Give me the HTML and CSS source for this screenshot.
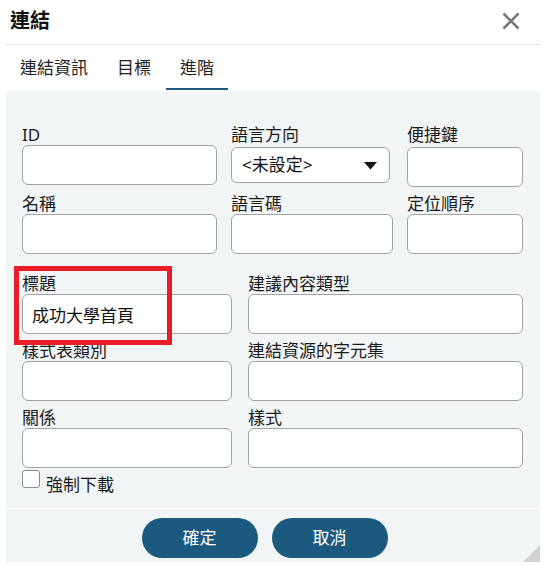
FILE: index.html
```html
<!DOCTYPE html>
<html lang="zh-Hant">
<head>
<meta charset="utf-8">
<title>連結</title>
<link rel="stylesheet" href="styles.css">
</head>
<body>
<div class="dialog">
  <header class="dialog-header">
    <h1 class="dialog-title">連結</h1>
    <button class="close-btn" aria-label="關閉">
      <svg width="18" height="18" viewBox="0 0 18 18"><path d="M1.5 1.5 L16.5 16.5 M16.5 1.5 L1.5 16.5" stroke="#777" stroke-width="2.6" stroke-linecap="butt" fill="none"/></svg>
    </button>
  </header>
  <nav class="tabs">
    <div class="tab">連結資訊</div>
    <div class="tab">目標</div>
    <div class="tab tab--active">進階</div>
  </nav>
  <section class="panel">
    <div class="form">
      <div class="grid grid--three">
        <div class="field"><label class="field-label">ID</label><input class="text-input" type="text"></div>
        <div class="field"><label class="field-label">語言方向</label>
          <div class="select"><span>&lt;未設定&gt;</span>
            <svg width="13" height="8" viewBox="0 0 13 8"><path d="M0 0 H13 L6.5 7.5 Z" fill="#111"/></svg>
          </div>
        </div>
        <div class="field field--shift"><label class="field-label">便捷鍵</label><input class="text-input" type="text"></div>
        <div class="field"><label class="field-label">名稱</label><input class="text-input" type="text"></div>
        <div class="field"><label class="field-label">語言碼</label><input class="text-input" type="text"></div>
        <div class="field"><label class="field-label">定位順序</label><input class="text-input" type="text"></div>
      </div>
      <div class="grid grid--two">
        <div class="field"><label class="field-label">標題</label><input class="text-input" type="text" value="成功大學首頁"></div>
        <div class="field"><label class="field-label">建議內容類型</label><input class="text-input" type="text"></div>
        <div class="field"><label class="field-label">樣式表類別</label><input class="text-input" type="text"></div>
        <div class="field"><label class="field-label">連結資源的字元集</label><input class="text-input" type="text"></div>
        <div class="field"><label class="field-label">關係</label><input class="text-input" type="text"></div>
        <div class="field"><label class="field-label">樣式</label><input class="text-input" type="text"></div>
      </div>
      <label class="check-row"><span class="checkbox"></span><span>強制下載</span></label>
    </div>
    <div class="footer">
      <button class="btn">確定</button>
      <button class="btn">取消</button>
    </div>
    <div class="highlight"></div>
    <div class="grip"></div>
  </section>
</div>
</body>
</html>
```
FILE: styles.css
```css
html, body {
  margin: 0;
  padding: 0;
  background: #ffffff;
}
body {
  font-family: "Noto Sans", "Noto Sans CJK TC", sans-serif;
  color: #1a1a1a;
  width: 546px;
  height: 566px;
  overflow: hidden;
}
.dialog {
  display: flex;
  flex-direction: column;
}
.dialog-header {
  height: 44px;
  margin: 0 5px;
  padding: 0 5px;
  border-bottom: 1px solid #e6e6e6;
  display: flex;
  align-items: center;
  justify-content: space-between;
}
.dialog-title {
  margin: 0;
  font-size: 20px;
  font-weight: 700;
  line-height: 24px;
  color: #111;
  padding-bottom: 3px;
}
.close-btn {
  background: none;
  border: none;
  padding: 0;
  margin-right: 16px;
  width: 18px;
  height: 18px;
  display: flex;
  margin-bottom: 3px;
}
.tabs {
  display: flex;
  gap: 1px;
  margin: 0 6px;
  height: 45px;
}
.tab {
  box-sizing: border-box;
  height: 45px;
  padding: 3px 14px 0;
  display: flex;
  align-items: center;
  font-size: 17px;
  line-height: 20px;
  color: #222;
  border-bottom: 2px solid transparent;
}
.tab--active {
  border-bottom-color: #1b5a7e;
}
.panel {
  position: relative;
  margin: 1px 6px 0;
  background: #f2f5f6;
  border-radius: 4px 4px 0 0;
  height: 471px;
  box-sizing: border-box;
}
.form {
  padding: 33px 17px 0 16px;
  height: 418px;
  box-sizing: border-box;
  border-bottom: 1px solid #ffffff;
}
.grid {
  display: grid;
}
.grid--three {
  grid-template-columns: 195px 162px 1fr;
  column-gap: 14px;
  row-gap: 8px;
}
.grid--two {
  grid-template-columns: 210px 1fr;
  column-gap: 16px;
  row-gap: 6px;
  margin-top: 19px;
}
.field {
  display: flex;
  flex-direction: column;
}
.field-label {
  font-size: 17px;
  line-height: 21px;
  height: 21px;
  color: #1a1a1a;
}
.text-input {
  box-sizing: border-box;
  width: 100%;
  height: 40px;
  margin: 0;
  border: 1px solid #a3a3a3;
  border-radius: 6px;
  background: #fff;
  padding: 0 9px;
  font-family: "Noto Sans", "Noto Sans CJK TC", sans-serif;
  font-size: 17px;
  color: #111;
  outline: none;
}
.field--shift .text-input {
  margin-top: 2px;
  margin-bottom: -2px;
}
.select {
  box-sizing: border-box;
  width: 159px;
  height: 36px;
  margin-top: 2px;
  border: 1px solid #a3a3a3;
  border-radius: 6px;
  background: #fff;
  display: flex;
  align-items: center;
  justify-content: space-between;
  padding: 0 12px 0 10px;
  font-size: 17px;
  line-height: 20px;
  color: #111;
}
.select svg {
  margin-top: 1px;
}
.check-row {
  display: flex;
  align-items: flex-start;
  gap: 6px;
  margin-top: 2px;
  font-size: 17px;
  line-height: 20px;
}
.checkbox {
  box-sizing: border-box;
  width: 18px;
  height: 18px;
  border: 1.5px solid #8a8a8a;
  border-radius: 3px;
  background: #fff;
}
.check-row span:last-child {
  margin-top: 5px;
}
.footer {
  display: flex;
  justify-content: center;
  gap: 14px;
  padding: 9px 17px 0 0;
}
.btn {
  width: 116px;
  height: 40px;
  border: none;
  border-radius: 20px;
  background: #1b5a7e;
  color: #fff;
  font-family: "Noto Sans", "Noto Sans CJK TC", sans-serif;
  font-size: 17px;
  line-height: 20px;
  padding: 0;
}
.highlight {
  position: absolute;
  left: 8px;
  top: 175px;
  width: 158px;
  height: 79px;
  box-sizing: border-box;
  border: 5px solid #e91d25;
  pointer-events: none;
}
.grip {
  position: absolute;
  right: 0;
  bottom: 0;
  width: 17px;
  height: 17px;
  background: #d3d3d3;
  clip-path: polygon(100% 0, 100% 100%, 0 100%);
}
```
